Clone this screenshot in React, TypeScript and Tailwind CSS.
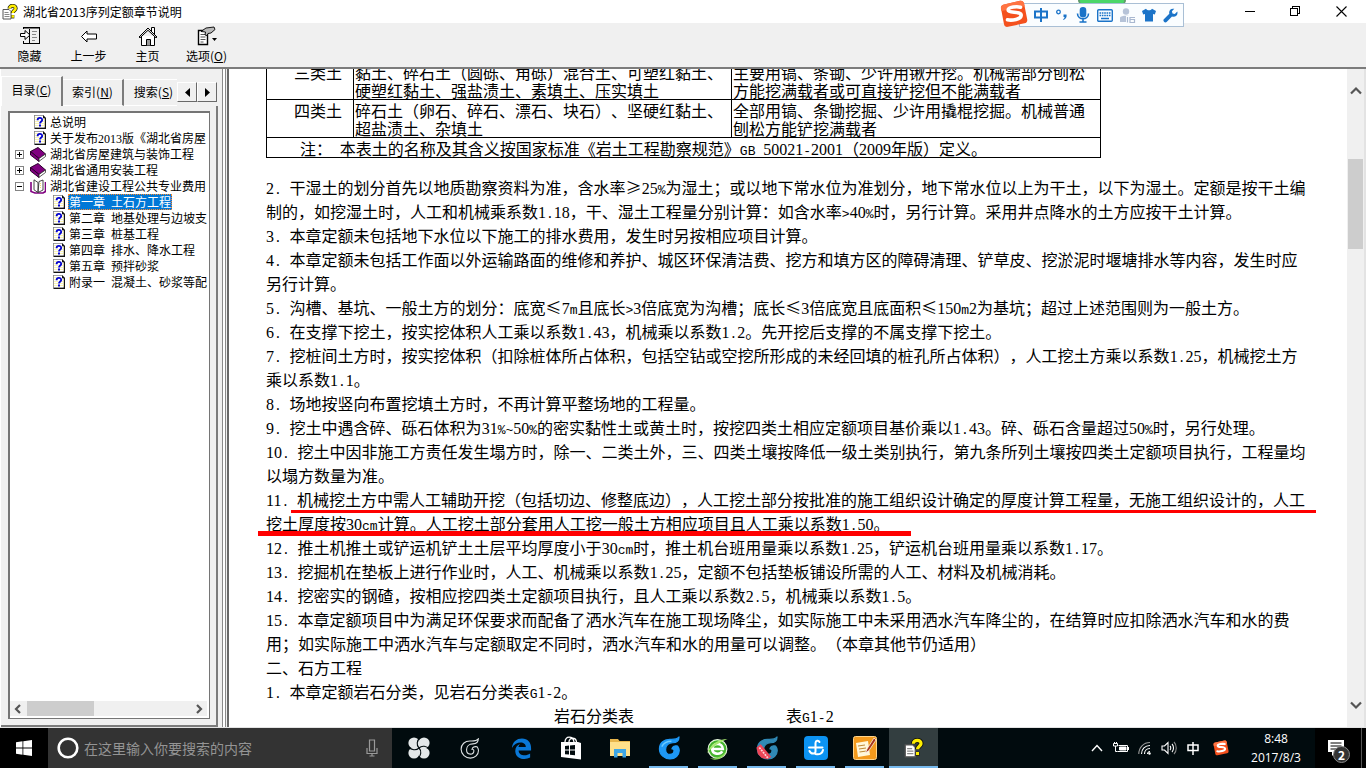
import { Fragment, type ReactNode } from "react";

const CJK = "font-['Noto_Sans_CJK_SC',sans-serif]";

// Half-width characters take exactly half an em, as in a fixed-pitch Song face
function Mixed({ text, small = false }: { text: string; small?: boolean }) {
  const parts = text.split(/(\d+|[\x20-\x2f\x3a-\x7e]+)/);
  return (
    <>
      {parts.map((part, i) => {
        if (i % 2 === 0) return <Fragment key={i}>{part}</Fragment>;
        if (/\d/.test(part)) {
          return (
            <span key={i} className="font-['Liberation_Serif',serif] leading-none">
              {part}
            </span>
          );
        }
        return (
          <span
            key={i}
            className={`font-['Liberation_Mono',monospace] leading-none whitespace-pre ${small ? "text-[10px]" : "text-[13px]"}`}
          >
            {part}
          </span>
        );
      })}
    </>
  );
}

/* ---------- title bar ---------- */

function HelpFileIcon({ className }: { className: string }) {
  return (
    <svg viewBox="0 0 16 16" className={className} aria-hidden="true">
      <path d="M1 5.5h6l2 2V15H1z" fill="#fff" stroke="#555" />
      <path d="M2.500 8.500h4M2.500 10.500h5M2.500 12.500h5" stroke="#888" strokeWidth="1" />
      <path d="M7.500 4.500C7.500 1 14 1 13.600 4.600c-.2 2-2.800 2-2.800 4.400" fill="none" stroke="#111" strokeWidth="4" />
      <path d="M9.300 11h3v3.400h-3z" fill="#111" />
      <path d="M7.500 4.500C7.500 1 14 1 13.600 4.600c-.2 2-2.800 2-2.800 4.400" fill="none" stroke="#ffee00" strokeWidth="2.600" />
      <path d="M9.600 11.200h2.400v2.500H9.600z" fill="#ffee00" />
    </svg>
  );
}

function TitleBar() {
  return (
    <header className="relative flex h-[23px] shrink-0 items-center bg-white pr-0.5">
      <HelpFileIcon className="ml-0.5 size-4" />
      <h1 className="ml-[5px] flex-1 text-xs leading-5">湖北省2013序列定额章节说明</h1>
      <SogouBar />
      <button aria-label="最小化" className="flex h-5 w-[46px] items-center justify-center">
        <svg viewBox="0 0 11 11" className="size-[11px]" shapeRendering="crispEdges">
          <path d="M0 5.500h10" stroke="#000" />
        </svg>
      </button>
      <button aria-label="还原" className="flex h-5 w-[45px] items-center justify-center">
        <svg viewBox="0 0 11 11" className="size-[11px]" fill="none" stroke="#000" shapeRendering="crispEdges">
          <path d="M.5 2.500h7v7h-7zM2.500 2.500v-2h7v7h-2" />
        </svg>
      </button>
      <button aria-label="关闭" className="flex h-5 w-[46px] items-center justify-center">
        <svg viewBox="0 0 11 11" className="size-[11px]" stroke="#000" strokeWidth="1.100">
          <path d="M.5.5l10 10M10.500.5l-10 10" />
        </svg>
      </button>
    </header>
  );
}

function SogouLogo({ className }: { className: string }) {
  return (
    <svg viewBox="0 0 28 28" className={className} aria-hidden="true">
      <path d="M4 4.500L20 .8c2-.4 3.500.5 4 2.500l3.200 16c.4 2-.6 3.500-2.600 4L8 26.800c-2 .4-3.500-.6-4-2.600L1 8.500c-.4-2 .6-3.500 3-4z" fill="#f4511e" />
      <path d="M4 4.500L20 .8c2-.4 3.500.5 4 2.500l.6 3L1.500 11 1 8.500c-.4-2 .6-3.500 3-4z" fill="#ff7443" />
      <path d="M20.500 7.200c-3-.8-12.500-.6-12.300 3 .2 3.400 13 .6 13 5 0 4.200-9.500 5.600-13.700 4.600" fill="none" stroke="#fff" strokeWidth="3.600" strokeLinecap="round" />
    </svg>
  );
}

function SogouBar() {
  return (
    <div className="absolute top-0 right-[182px] z-10 h-7">
      <div className="absolute top-0 right-[58px] h-1 w-12 rounded-b-sm border-x-2 border-[#5f9c6b] bg-[#4bd668]" />
      <div className="relative mt-[3px] ml-[20px] flex h-6 w-[165px] items-center border border-[#a9bfd5] bg-[#fafdff] pr-0.5 pl-3 text-[#1a73c8]">
        <SogouLogo className="absolute -top-1 -left-5 size-7" />
        <button aria-label="中文" className="flex w-[18px] justify-center">
          <svg viewBox="0 0 14 14" className="size-3.5" fill="none" stroke="currentColor" strokeWidth="2">
            <path d="M1 3.500h12v6H1zM7 0v14" />
          </svg>
        </button>
        <button aria-label="标点" className="flex w-[26px] justify-center">
          <svg viewBox="0 0 14 14" className="size-3.5">
            <circle cx="3.500" cy="4" r="1.800" fill="none" stroke="currentColor" strokeWidth="1.300" />
            <path d="M8.500 6.500h3c.6 2.500-.5 4.500-3 5.500l-.4-.8c1-.6 1.500-1.400 1.400-2.200h-1z" fill="currentColor" />
          </svg>
        </button>
        <button aria-label="语音" className="flex w-[18px] justify-center">
          <svg viewBox="0 0 14 16" className="h-4 w-3.5" fill="none" stroke="currentColor" strokeWidth="1.600">
            <rect x="4.500" y=".8" width="5" height="9" rx="2.500" fill="currentColor" />
            <path d="M1.500 6.500c0 7 11 7 11 0M7 11.500V15M3.500 15h7" />
          </svg>
        </button>
        <button aria-label="软键盘" className="flex w-[26px] justify-center">
          <svg viewBox="0 0 16 13" className="h-[13px] w-4">
            <rect x=".7" y=".7" width="14.600" height="11.600" rx="1" fill="none" stroke="currentColor" strokeWidth="1.400" />
            <path d="M2.500 4h11M2.500 6.500h11" stroke="currentColor" strokeWidth="1.500" strokeDasharray="1.600 .75" />
            <path d="M4 9.500h8" stroke="currentColor" strokeWidth="1.500" />
          </svg>
        </button>
        <button aria-label="账号" className="flex w-[22px] justify-center">
          <svg viewBox="0 0 16 15" className="h-[15px] w-4">
            <circle cx="6" cy="3.500" r="3.200" fill="#b6c3d8" />
            <path d="M0 14V9.500C1 7 11 7 12 9.500V14z" fill="#b6c3d8" />
            <path d="M6 8h10v7H6z" fill="#fafdff" />
            <path d="M7.500 9v5.500M10 9.500h5M10 9v5.500h4.500v-3H10" fill="none" stroke="#a9b8d0" strokeWidth="1.200" />
          </svg>
        </button>
        <button aria-label="皮肤" className="flex w-[22px] justify-center">
          <svg viewBox="0 0 14 14" className="size-3.5" fill="currentColor">
            <path d="M4 .8c1.500 2 4.500 2 6 0L14 3l-1.200 3.500-1.800-.5v7.500H3V6l-1.800.5L0 3z" />
          </svg>
        </button>
        <button aria-label="工具" className="flex w-[22px] justify-center">
          <svg viewBox="0 0 15 15" className="size-[15px]" fill="currentColor">
            <path d="M14.300 3.600l-2.500 2.500-2.300-.6-.6-2.300L11.300.8C8 0 5.500 2.500 6.300 5.700L.8 11.200c-1.400 1.600 1 4.200 2.800 2.800l5.400-5.500c3.500 1 6.300-1.700 5.300-4.900z" />
          </svg>
        </button>
      </div>
    </div>
  );
}

/* ---------- toolbar ---------- */

function HideIcon() {
  return (
    <svg viewBox="0 0 20 20" className="size-5" fill="none" stroke="#000" shapeRendering="crispEdges">
      <path d="M3.500 3V1.500h16v16h-16V15M9.500 1v17" />
      <path d="M4 2.500h15" stroke="#777" />
      <path d="M12 5.500h5M12 8.500h4M12 11.500h5M12 14.500h3" stroke="#888" />
      <path d="M.5 7.500H5v-3l5 4.500-5 4.500v-3H.5z" fill="#fff" shapeRendering="auto" />
    </svg>
  );
}

function BackIcon() {
  return (
    <svg viewBox="0 0 20 20" className="size-5" fill="#fff" stroke="#000">
      <path d="M2.500 10.500L8 5v3h9.500v5H8v3z" />
    </svg>
  );
}

function HomeIcon() {
  return (
    <svg viewBox="0 0 20 20" className="size-5" fill="#fff" stroke="#000">
      <path d="M13.500 5V1.500h3V9M3.500 10v9.500h13V10" />
      <path d="M1 11l9-9 9 9-1 .8-8-7.500-8 7.500z" fill="#ddd" />
      <path d="M8.500 19.500v-6h4v6" fill="#999" />
    </svg>
  );
}

function OptionsIcon() {
  return (
    <svg viewBox="0 0 20 20" className="size-5" fill="none" stroke="#000">
      <path d="M1.500 4.500h9v14h-9z" fill="#fff" strokeWidth="1.400" />
      <path d="M3.500 8.500h5M3.500 11h5M3.500 13.500h5M3.500 16h3" stroke="#555" />
      <path d="M4 5.500L9 2l8-1 1 2.500L14 7l-3 .5-1 2-2-.5.500-3z" fill="#b9b9b9" strokeWidth=".9" />
      <path d="M15 12h5l-2.500 3z" fill="#000" stroke="none" />
    </svg>
  );
}

const tools: { label: ReactNode; name: string; icon: ReactNode }[] = [
  { name: "hide", label: "隐藏", icon: <HideIcon /> },
  { name: "back", label: "上一步", icon: <BackIcon /> },
  { name: "home", label: "主页", icon: <HomeIcon /> },
  { name: "options", label: <>选项(<u>O</u>)</>, icon: <OptionsIcon /> },
];

function Toolbar() {
  return (
    <div className="flex h-[46px] shrink-0 border-b-2 border-[#7c7c7c] bg-[#f0f0f0]">
      {tools.map((tool) => (
        <button key={tool.name} className="flex w-[59px] flex-col items-center pt-[3px]">
          {tool.icon}
          <span className="mt-0.5 text-xs leading-4 whitespace-nowrap">{tool.label}</span>
        </button>
      ))}
    </div>
  );
}

/* ---------- contents pane ---------- */

function TopicIcon() {
  return (
    <svg viewBox="0 0 12 14" className="h-3.5 w-3 shrink-0" aria-hidden="true">
      <path d="M0 0h9l3 3v11H0z" fill="#808080" />
      <path d="M10.500 3H12v11H1v-1.500h9.500zM9 0l3 3H9z" fill="#111" />
      <path d="M.8.8H9v2.700h1.700v9H.8z" fill="#fff" />
      <path d="M2 2v10M4 2v10M8 4v8M10 4v8" stroke="#f5ea6a" strokeWidth="1" strokeDasharray="1 1" />
      <path d="M3.600 5.200c0-3 4.600-3 4.600-.3 0 1.600-2.200 1.500-2.200 3.600" fill="none" stroke="#0000d0" strokeWidth="1.800" />
      <path d="M5 9.600h2v1.800H5z" fill="#0000d0" />
    </svg>
  );
}

function BookIcon() {
  return (
    <svg viewBox="0 0 16 15" className="h-[15px] w-4 shrink-0" aria-hidden="true">
      <path d="M.5 4.500L8 .5 15.500 7 9 11.500z" fill="#800080" stroke="#2b002b" />
      <path d="M.5 4.500v3.500L9 14.500v-3z" fill="#800080" stroke="#2b002b" />
      <path d="M9 11.500L15.500 7v2.500L9 14.300z" fill="#fff" stroke="#333" strokeWidth=".8" />
    </svg>
  );
}

function OpenBookIcon() {
  return (
    <svg viewBox="0 0 16 15" className="h-[15px] w-4 shrink-0" aria-hidden="true">
      <path d="M1 3v9.500l4 1.500h8l2.500-1.500V3" fill="#fff" stroke="#800080" strokeWidth="1.600" />
      <path d="M8 13.500V3.500L4 .8v10zM8 13.500l1-11 4-1.500v10z" fill="#fff" stroke="#333" strokeWidth=".9" />
      <path d="M10.500 4v6" stroke="#f0e070" strokeDasharray="1 1" />
    </svg>
  );
}

function Expander({ open }: { open: boolean }) {
  return (
    <svg viewBox="0 0 9 9" className="size-[9px] shrink-0" fill="none" stroke="#000" shapeRendering="crispEdges">
      <path d="M.5.5h8v8h-8z" stroke="#848484" />
      <path d={open ? "M2 4.500h5" : "M2 4.500h5M4.500 2v5"} />
    </svg>
  );
}

type Node = { title: string; kind: "topic" | "book" | "open"; child?: boolean; selected?: boolean };

const nodes: Node[] = [
  { title: "总说明", kind: "topic" },
  { title: "关于发布2013版《湖北省房屋", kind: "topic" },
  { title: "湖北省房屋建筑与装饰工程", kind: "book" },
  { title: "湖北省通用安装工程", kind: "book" },
  { title: "湖北省建设工程公共专业费用", kind: "open" },
  { title: "第一章 土石方工程", kind: "topic", child: true, selected: true },
  { title: "第二章 地基处理与边坡支", kind: "topic", child: true },
  { title: "第三章 桩基工程", kind: "topic", child: true },
  { title: "第四章 排水、降水工程", kind: "topic", child: true },
  { title: "第五章 预拌砂浆", kind: "topic", child: true },
  { title: "附录一 混凝土、砂浆等配", kind: "topic", child: true },
];

function TreeRow({ node }: { node: Node }) {
  return (
    <li className={`flex h-4 items-center ${node.child ? "pl-[42px]" : "pl-1"}`}>
      {!node.child && (
        <span className={`flex shrink-0 items-center ${node.kind === "topic" ? "w-[19px]" : "w-[15px]"}`}>
          {node.kind !== "topic" && <Expander open={node.kind === "open"} />}
        </span>
      )}
      {node.kind === "topic" && <TopicIcon />}
      {node.kind === "book" && <BookIcon />}
      {node.kind === "open" && <OpenBookIcon />}
      <button
        className={`ml-[3px] h-4 px-px text-xs leading-4 whitespace-nowrap ${
          node.selected ? "bg-[#0078d7] text-white outline-1 -outline-offset-1 outline-dotted outline-[#ff8728]" : ""
        }`}
      >
        <Mixed text={node.title} small />
      </button>
    </li>
  );
}

function Chevron({ dir }: { dir: "up" | "down" | "left" | "right" }) {
  const d = {
    up: "M1 8.500L6 3.500 11 8.500",
    down: "M1 3.500L6 8.500 11 3.500",
    left: "M8 2L4 6l4 4",
    right: "M4 2l4 4-4 4",
  }[dir];
  return (
    <svg viewBox="0 0 12 12" className="size-3" fill="none" stroke="#555" strokeWidth="2.200">
      <path d={d} />
    </svg>
  );
}

const spinClass =
  "mb-1 flex size-5 items-center justify-center border border-t-white border-l-white border-r-[#696969] border-b-[#696969]";

function Sidebar() {
  return (
    <aside className="flex w-[218px] shrink-0 flex-col border-l border-white">
      <div className="flex h-[37px] shrink-0 items-end text-xs" role="tablist">
        <button role="tab" aria-selected="true" className="h-[30px] w-[62px] border-t border-l border-r-2 border-t-white border-l-white border-r-[#7c7c7c] pb-1 text-center">
          目录(<u>C</u>)
        </button>
        <button role="tab" aria-selected="false" className="h-[27px] w-[61px] border-t border-r-2 border-b border-t-white border-r-[#7c7c7c] border-b-white pb-0.5 text-center">
          索引(<u>N</u>)
        </button>
        <button role="tab" aria-selected="false" className="h-[27px] w-[53px] overflow-hidden border-t border-b border-white pb-0.5 pl-1.5 text-center whitespace-nowrap">
          搜索(<u>S</u>)
        </button>
        <button aria-label="向左" className={spinClass}>
          <svg viewBox="0 0 5 9" className="h-[9px] w-[5px]"><path d="M5 0v9L0 4.500z" /></svg>
        </button>
        <button aria-label="向右" className={spinClass}>
          <svg viewBox="0 0 5 9" className="h-[9px] w-[5px]"><path d="M0 0v9l5-4.500z" /></svg>
        </button>
      </div>
      <div className="flex min-h-0 flex-1 flex-col border-r-2 border-b-2 border-[#7c7c7c] pt-[5px] pr-1.5 pb-1.5 pl-[7px]">
        <div className="flex min-h-0 flex-1 flex-col border-2 border-r border-b border-[#757575] bg-white">
          <ul className="flex-1 overflow-hidden pt-px pl-px">
            {nodes.map((node) => (
              <TreeRow key={node.title} node={node} />
            ))}
          </ul>
          <div className="mr-0.5 mb-0.5 flex h-[15px] items-center justify-between bg-[#f0f0f0] px-0.5">
            <Chevron dir="left" />
            <div className="mr-auto ml-[3px] h-[15px] w-[67px] bg-[#cdcdcd]" />
            <Chevron dir="right" />
          </div>
        </div>
      </div>
    </aside>
  );
}

/* ---------- article ---------- */

const linesBefore = [
  "2. 干湿土的划分首先以地质勘察资料为准，含水率≥25%为湿土；或以地下常水位为准划分，地下常水位以上为干土，以下为湿土。定额是按干土编",
  "制的，如挖湿土时，人工和机械乘系数1.18，干、湿土工程量分别计算：如含水率>40%时，另行计算。采用井点降水的土方应按干土计算。",
  "3. 本章定额未包括地下水位以下施工的排水费用，发生时另按相应项目计算。",
  "4. 本章定额未包括工作面以外运输路面的维修和养护、城区环保清洁费、挖方和填方区的障碍清理、铲草皮、挖淤泥时堰塘排水等内容，发生时应",
  "另行计算。",
  "5. 沟槽、基坑、一般土方的划分：底宽≤7m且底长>3倍底宽为沟槽；底长≤3倍底宽且底面积≤150m2为基坑；超过上述范围则为一般土方。",
  "6. 在支撑下挖土，按实挖体积人工乘以系数1.43，机械乘以系数1.2。先开挖后支撑的不属支撑下挖土。",
  "7. 挖桩间土方时，按实挖体积（扣除桩体所占体积，包括空钻或空挖所形成的未经回填的桩孔所占体积），人工挖土方乘以系数1.25，机械挖土方",
  "乘以系数1.1。",
  "8. 场地按竖向布置挖填土方时，不再计算平整场地的工程量。",
  "9. 挖土中遇含碎、砾石体积为31%~50%的密实黏性土或黄土时，按挖四类土相应定额项目基价乘以1.43。碎、砾石含量超过50%时，另行处理。",
  "10. 挖土中因非施工方责任发生塌方时，除一、二类土外，三、四类土壤按降低一级土类别执行，第九条所列土壤按四类土定额项目执行，工程量均",
  "以塌方数量为准。",
];

const linesAfter = [
  "12. 推土机推土或铲运机铲土土层平均厚度小于30cm时，推土机台班用量乘以系数1.25，铲运机台班用量乘以系数1.17。",
  "13. 挖掘机在垫板上进行作业时，人工、机械乘以系数1.25，定额不包括垫板铺设所需的人工、材料及机械消耗。",
  "14. 挖密实的钢碴，按相应挖四类土定额项目执行，且人工乘以系数2.5，机械乘以系数1.5。",
  "15. 本章定额项目中为满足环保要求而配备了洒水汽车在施工现场降尘，如实际施工中未采用洒水汽车降尘的，在结算时应扣除洒水汽车和水的费",
  "用；如实际施工中洒水汽车与定额取定不同时，洒水汽车和水的用量可以调整。（本章其他节仍适用）",
  "二、石方工程",
  "1. 本章定额岩石分类，见岩石分类表G1-2。",
];

function Line({ text, children }: { text: string; children?: ReactNode }) {
  return (
    <p className="relative h-6 leading-6 whitespace-nowrap">
      <Mixed text={text} />
      {children}
    </p>
  );
}

function SoilTable() {
  const cell = "border border-black px-px pt-px pb-0 text-left align-top";
  return (
    <table className="w-[835px] table-fixed border-collapse leading-[18px]">
      <colgroup>
        <col className="w-[87px]" />
        <col className="w-[378px]" />
        <col />
      </colgroup>
      <tbody>
        <tr>
          <td className={cell}><div className="pl-4 text-center">三类土</div></td>
          <td className={cell}>黏土、碎石土（圆砾、角砾）混合土、可塑红黏土、<br />硬塑红黏土、强盐渍土、素填土、压实填土</td>
          <td className={cell}>主要用镐、条锄、少许用锹开挖。机械需部分刨松<br />方能挖满载者或可直接铲挖但不能满载者</td>
        </tr>
        <tr>
          <td className={cell}><div className="pl-4 text-center">四类土</div></td>
          <td className={cell}>碎石土（卵石、碎石、漂石、块石）、坚硬红黏土、<br />超盐渍土、杂填土</td>
          <td className={cell}>全部用镐、条锄挖掘、少许用撬棍挖掘。机械普通<br />刨松方能铲挖满载者</td>
        </tr>
        <tr>
          <td colSpan={3} className={cell}>
            <div className="h-[18px] pl-8 whitespace-nowrap">
              <Mixed text="注： 本表土的名称及其含义按国家标准《岩土工程勘察规范》GB 50021-2001（2009年版）定义。" />
            </div>
          </td>
        </tr>
      </tbody>
    </table>
  );
}

function Article() {
  return (
    <main className="flex min-w-0 flex-1 border-l-2 border-[#696969] bg-white">
      <div className="min-w-0 flex-1 overflow-hidden pl-[37px] text-base [text-spacing-trim:space-all]">
        <div className="-mt-2">
          <SoilTable />
        </div>
        <div className="mt-[17px]">
          {linesBefore.map((text) => (
            <Line key={text} text={text} />
          ))}
          <Line text="11. 机械挖土方中需人工辅助开挖（包括切边、修整底边），人工挖土部分按批准的施工组织设计确定的厚度计算工程量，无施工组织设计的，人工">
            <span className="absolute top-[23px] left-[25px] h-[3px] w-[1025px] bg-[#ff0000]" />
          </Line>
          <Line text="挖土厚度按30cm计算。人工挖土部分套用人工挖一般土方相应项目且人工乘以系数1.50。">
            <span className="absolute top-5 -left-2 h-[5px] w-[653px] bg-[#ff0000]" />
          </Line>
          {linesAfter.map((text) => (
            <Line key={text} text={text} />
          ))}
          <div className="flex gap-[152px] pl-72 leading-6">
            <span>岩石分类表</span>
            <span><Mixed text="表G1-2" /></span>
          </div>
        </div>
      </div>
      <div className="flex w-[19px] shrink-0 flex-col items-center border-r-2 border-[#e3e3e3] bg-[#f0f0f0] pt-4 pb-4">
        <Chevron dir="up" />
        <div className="mt-[62px] mb-auto h-[90px] w-[15px] bg-[#cdcdcd]" />
        <Chevron dir="down" />
      </div>
    </main>
  );
}

/* ---------- taskbar ---------- */

const swirl =
  "M22.500 1c0 4-2.500 6-6.500 6-4.500 0-7.500 3-7.500 7 0 3.200 2 5.200 4.500 5.200s4.200-1.800 4.200-4c0-1.200-1-2-2.200-1.700.5-2.500 3-3.800 6-3 1.200 1.400 1.700 3 1.700 4.500 0 5-4.200 9-9.700 9S2 19.500 2 13.500 6.500 3.500 12.500 3.500c4.500 0 7.500.5 10-2.500z";

const apps: { name: string; running?: boolean; active?: boolean; icon: ReactNode }[] = [
  {
    name: "Edge",
    icon: (
      <svg viewBox="0 0 24 24" className="size-[23px]">
        <path d="M2 11.500C2.500 5 7 1.500 12.500 1.500c6 0 9.500 4 9.500 10V14H9c.2 5.500 7.500 6.500 12 3.300v4.200c-5.500 3-15 1.500-15.500-6.500C5.300 11 7.500 8.500 10.500 7.300 9.500 8.300 9 9.300 8.800 10.500h7.700c0-6.500-10.500-6.500-14.500 1z" fill="#0a78d7" />
      </svg>
    ),
  },
  {
    name: "应用商店",
    icon: (
      <svg viewBox="0 0 22 24" className="h-6 w-[22px]">
        <path d="M5 6c0-6.500 8-6.500 9 0M9 6c0-5 7-5 7.500 0" fill="none" stroke="#fff" strokeWidth="1.300" />
        <path d="M1 6h17l3 1v16.500L1 21z" fill="#fff" />
        <path d="M5 10l4-.4v4H5zM10 9.500l5-.5v4.600h-5zM5 14.600h4v4l-4-.4zM10 14.600h5v4.600l-5-.5z" fill="#010b0e" />
      </svg>
    ),
  },
  {
    name: "文件资源管理器",
    icon: (
      <svg viewBox="0 0 22 20" className="h-5 w-[22px]">
        <path d="M1 1h8l1.500 2H21v15H1z" fill="#e8b64c" />
        <path d="M1 4h20v14H1z" fill="#ffe08a" />
        <path d="M5 19.500V11h12v8.500h-3.500V15h-5v4.500z" fill="#3ea6e5" />
      </svg>
    ),
  },
  {
    name: "广联达",
    running: true,
    icon: (
      <svg viewBox="0 0 24 25" className="h-6 w-6">
        <path d={swirl} fill="#1e98f5" stroke="#1e98f5" strokeWidth="1.200" strokeLinejoin="round" />
        <path d="M4.500 11c2-4 6-5.500 10-5.500" stroke="#6dcbff" strokeWidth="1.500" fill="none" />
      </svg>
    ),
  },
  {
    name: "360浏览器",
    running: true,
    icon: (
      <svg viewBox="0 0 24 24" className="size-[23px]">
        <circle cx="12" cy="12.500" r="9.800" fill="#46b52e" stroke="#e8f7df" strokeWidth="1.200" />
        <path d="M6.500 12.500h11c0-7-11-7-11 0 0 5.500 8 6.500 10.500 2.500" fill="none" stroke="#fff" strokeWidth="2.800" />
        <path d="M1 17C4 8 13 2 22.500 2 14 5.500 6 10.500 1 17z" fill="#a5e86e" />
        <path d="M4 22.500c6 .5 13-2 17.500-8-3 8-11 11-17.500 8z" fill="#8fdc5a" />
      </svg>
    ),
  },
  {
    name: "计价软件",
    running: true,
    icon: (
      <svg viewBox="0 0 24 25" className="h-6 w-6">
        <path d={swirl} fill="#3089b5" stroke="#3089b5" strokeWidth="1.200" strokeLinejoin="round" />
        <path d="M1 12l4.500-3.500L16.500 22l-4 2.300-6-1.500-4-4z" fill="#ee4557" />
        <path d="M4 12l9 11" stroke="#ffd4d8" strokeWidth="1.800" strokeDasharray="2 1" />
      </svg>
    ),
  },
  {
    name: "广材助手",
    running: true,
    icon: (
      <svg viewBox="0 0 24 24" className="size-6">
        <rect width="24" height="24" rx="4" fill="#0c93f2" />
        <path d="M15.500 6c-1-2-4-1.500-4 1v8.500c0 2.500-4.500 3-6-.5M5 11.500h13.500M11.500 18c4 1 7-.5 7.500-4" fill="none" stroke="#fff" strokeWidth="2" strokeLinecap="round" />
      </svg>
    ),
  },
  {
    name: "便笺",
    running: true,
    icon: (
      <svg viewBox="0 0 24 24" className="size-6">
        <rect x=".5" y=".5" width="23" height="23" rx="2" fill="#f39a1d" stroke="#ffd48a" />
        <path d="M3 7l12-2 2 14-12 2z" fill="#fff7da" />
        <path d="M5 10l7-1M6 13l7-1M6.500 16l7-1" stroke="#c08a3a" strokeWidth="1.200" />
        <path d="M21 2l-7 11-1.500 4 3.500-2.500L23 4z" fill="#a8361b" stroke="#fff" strokeWidth=".7" />
      </svg>
    ),
  },
  { name: "章节说明", running: true, active: true, icon: <HelpFileIcon className="size-5" /> },
];

function Taskbar() {
  return (
    <footer className="flex h-10 shrink-0 bg-[#010b0e] text-white">
      <button aria-label="开始" className="flex w-12 items-center justify-center bg-black">
        <svg viewBox="0 0 16 16" className="size-4" fill="#fff">
          <path d="M0 2.200l6.500-.9v6.200H0zM7.300 1.200L16 0v7.500H7.300zM0 8.400h6.500v6.300L0 13.800zM7.300 8.400H16V16l-8.700-1.200z" />
        </svg>
      </button>
      <label className="flex w-[344px] items-center bg-[#333333] pr-3.5 pl-2">
        <svg viewBox="0 0 24 24" className="size-6" fill="none" stroke="#fff" strokeWidth="2.600">
          <circle cx="12" cy="12" r="9.300" />
        </svg>
        <input
          aria-label="搜索"
          placeholder="在这里输入你要搜索的内容"
          className="ml-1 min-w-0 flex-1 bg-transparent text-sm outline-none placeholder:text-[#949494]"
        />
        <svg viewBox="0 0 12 18" className="h-[18px] w-3" fill="none" stroke="#9a9a9a" strokeWidth="1.200">
          <path d="M3.500 1h5v11h-5zM1 9v5.500h10V9M6 14.500V17M3.500 17h5" />
        </svg>
      </label>
      <div className="ml-0.5 flex">
        <button aria-label="360" className="flex w-[50px] items-center justify-center">
          <svg viewBox="0 0 22 22" className="size-[22px]">
            <g fill="#e4e8e9">
              <circle cx="6" cy="6" r="5.600" />
              <circle cx="16" cy="6" r="5.600" />
              <circle cx="16" cy="16" r="5.600" />
              <circle cx="6" cy="16" r="5.600" />
              <path d="M6 6h10v10H6z" />
            </g>
            <path
              d="M11 11C8 8 9 3.500 12 .5M11 11c3-3 7.500-2 10.500 1M11 11c3 3 2 7.500-1 10.500M11 11c-3 3-7.500 2-10.500-1"
              fill="none"
              stroke="#010b0e"
              strokeWidth="1.100"
            />
          </svg>
        </button>
        <button aria-label="G+" className="flex w-[50px] items-center justify-center">
          <svg viewBox="0 0 24 25" className="size-[21px]">
            <path d={swirl} fill="none" stroke="#dfe3e4" strokeWidth="1.300" />
          </svg>
        </button>
      </div>
      <div className="ml-[3px] flex">
        {apps.map((app) => (
          <button
            key={app.name}
            aria-label={app.name}
            className={`relative flex w-[49px] items-center justify-center ${app.active ? "bg-[#333e40]" : ""}`}
          >
            {app.icon}
            {app.running && (
              <span className={`absolute bottom-0 h-0.5 bg-[#76b9ed] ${app.active ? "inset-x-0" : "inset-x-[5px]"}`} />
            )}
          </button>
        ))}
      </div>
      <Tray />
    </footer>
  );
}

function Tray() {
  return (
    <div className="ml-auto flex items-center">
      <button aria-label="显示隐藏的图标" className="flex w-6 justify-center">
        <svg viewBox="0 0 12 8" className="h-2 w-3" fill="none" stroke="#fff" strokeWidth="1.400">
          <path d="M1 7l5-5.500L11 7" />
        </svg>
      </button>
      <button aria-label="电源" className="flex w-6 justify-center">
        <svg viewBox="0 0 16 12" className="h-3 w-4" fill="none" stroke="#fff">
          <path d="M5.500 3.500h9v6h-10M15.500 5v3" />
          <path d="M6.500 5h6.500v3H6.500z" fill="#fff" />
          <path d="M.5 1.500h4v2.500h-4zM2.500 4v5.500h2M1.500 0v2M3.500 0v2" />
        </svg>
      </button>
      <button aria-label="网络" className="flex w-6 justify-center">
        <svg viewBox="0 0 14 14" className="size-3.5" fill="none" stroke="#fff" strokeWidth="1.100">
          <path d="M9.500 13c0-1 1-2.500 2.500-2.500M6.500 13c0-3 2-5.500 5.500-5.500" />
          <path d="M3.500 13C3.500 8 7 4.500 12 4.500" />
          <path d="M.8 13C.8 6.500 5.500 1.500 12 1.500" stroke="#999" />
          <circle cx="11.500" cy="12.500" r="1.200" fill="#fff" stroke="none" />
        </svg>
      </button>
      <button aria-label="音量" className="flex w-6 justify-center">
        <svg viewBox="0 0 16 14" className="h-3.5 w-4" fill="none" stroke="#fff" strokeWidth="1.100">
          <path d="M1 5h2.500L7 1.500v11L3.500 9H1zM9 5c1 1 1 3 0 4M11 3c2 2 2 6 0 8" />
          <path d="M13 1c3 3 3 9 0 12" stroke="#888" />
        </svg>
      </button>
      <button aria-label="中文输入" className="flex w-6 justify-center">
        <svg viewBox="0 0 12 13" className="h-[13px] w-3" fill="none" stroke="#fff" strokeWidth="1.500">
          <path d="M1 3h10v5.500H1zM6 0v13" />
        </svg>
      </button>
      <button aria-label="搜狗输入法" className="flex w-8 justify-center">
        <SogouLogo className="size-4" />
      </button>
      <time className="mx-3 w-[54px] text-center font-['Open_Sans',sans-serif] text-xs leading-[19px]">
        8:48
        <br />
        2017/8/3
      </time>
      <button aria-label="通知" className="relative flex h-10 w-[46px] items-center justify-center bg-black">
        <svg viewBox="0 0 16 16" className="mr-1 size-4">
          <path d="M0 0h16v12H8l-4 4v-4H0z" fill="#fff" />
          <path d="M2.500 3h11M2.500 6h11M2.500 9h8" stroke="#000" />
        </svg>
        <span className="absolute top-[18px] left-[18px] flex size-[17px] items-center justify-center rounded-full border border-[#888] bg-[#333] text-xs leading-none font-bold">
          2
        </span>
      </button>
      <div className="h-10 w-[5px] border-l border-[#555] bg-black" />
    </div>
  );
}

export default function App() {
  return (
    <div className={`flex h-screen flex-col overflow-hidden bg-[#f0f0f0] text-black ${CJK}`}>
      <TitleBar />
      <Toolbar />
      <div className="flex min-h-0 flex-1 border-b border-[#e3e3e3]">
        <Sidebar />
        <div className="mr-px ml-1 w-1 shrink-0 cursor-col-resize border-x border-[#8a8a8a] bg-white" />
        <Article />
      </div>
      <Taskbar />
    </div>
  );
}
